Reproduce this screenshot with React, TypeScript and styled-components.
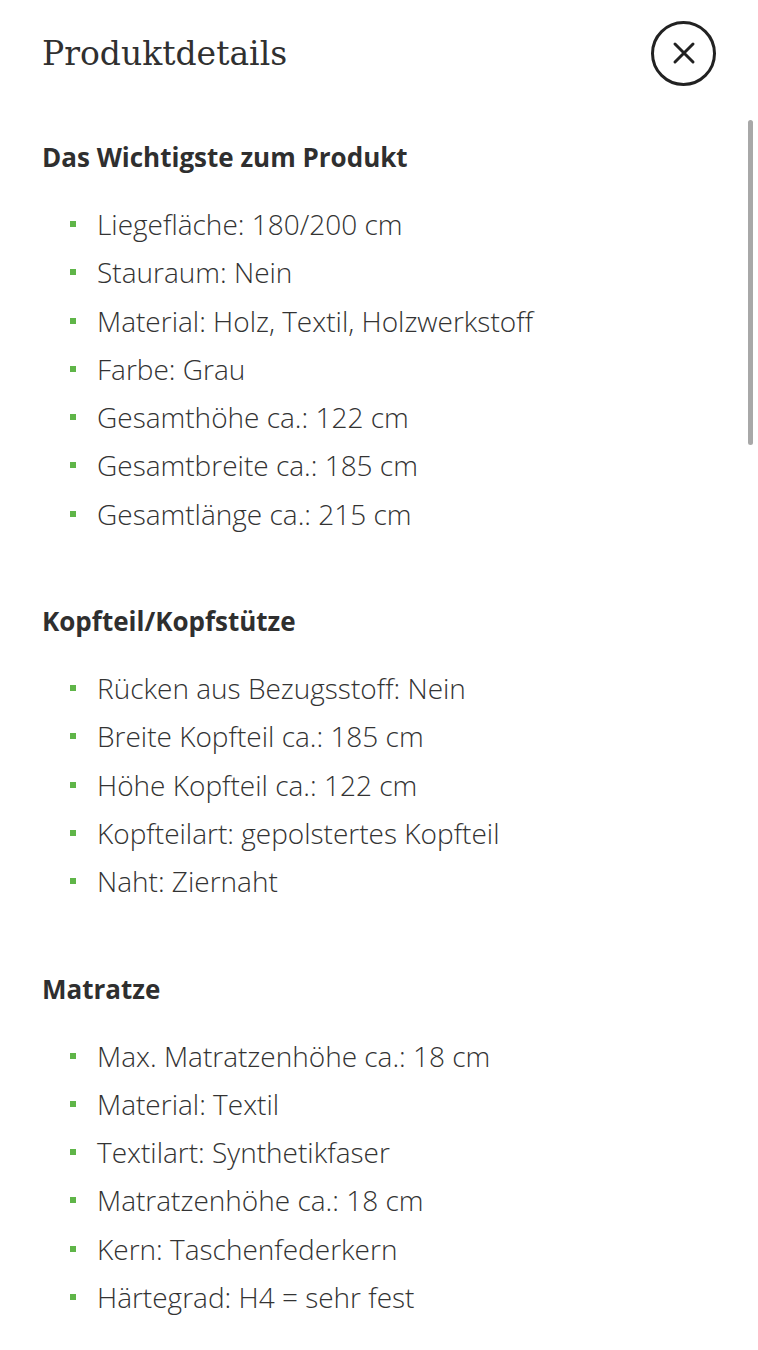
import React from "react";
import styled, { createGlobalStyle } from "styled-components";

const GlobalStyle = createGlobalStyle`
  html, body {
    margin: 0;
    padding: 0;
    background: #ffffff;
  }
  body {
    font-family: "Open Sans", "Noto Sans", sans-serif;
    color: #333333;
  }
`;

type Section = {
  title: string;
  items: string[];
};

const sections: Section[] = [
  {
    title: "Das Wichtigste zum Produkt",
    items: [
      "Liegefläche: 180/200 cm",
      "Stauraum: Nein",
      "Material: Holz, Textil, Holzwerkstoff",
      "Farbe: Grau",
      "Gesamthöhe ca.: 122 cm",
      "Gesamtbreite ca.: 185 cm",
      "Gesamtlänge ca.: 215 cm",
    ],
  },
  {
    title: "Kopfteil/Kopfstütze",
    items: [
      "Rücken aus Bezugsstoff: Nein",
      "Breite Kopfteil ca.: 185 cm",
      "Höhe Kopfteil ca.: 122 cm",
      "Kopfteilart: gepolstertes Kopfteil",
      "Naht: Ziernaht",
    ],
  },
  {
    title: "Matratze",
    items: [
      "Max. Matratzenhöhe ca.: 18 cm",
      "Material: Textil",
      "Textilart: Synthetikfaser",
      "Matratzenhöhe ca.: 18 cm",
      "Kern: Taschenfederkern",
      "Härtegrad: H4 = sehr fest",
    ],
  },
];

const App: React.FC = () => {
  return (
    <Page>
      <GlobalStyle />
      <Header>
        <Title>Produktdetails</Title>
        <CloseButton aria-label="Schließen">
          <svg width="24" height="24" viewBox="0 0 24 24" fill="none">
            <path
              d="M3 3 L21 21 M21 3 L3 21"
              stroke="#222"
              strokeWidth="3"
              strokeLinecap="round"
            />
          </svg>
        </CloseButton>
      </Header>

      <Content>
        {sections.map((s) => (
          <Block key={s.title}>
            <Heading>{s.title}</Heading>
            <List>
              {s.items.map((item) => (
                <Item key={item}>{item}</Item>
              ))}
            </List>
          </Block>
        ))}
      </Content>

      <Scrollbar />
    </Page>
  );
};

const Page = styled.div`
  position: relative;
  width: 758px;
  height: 1350px;
  overflow: hidden;
  background: #fff;
`;

const Header = styled.div`
  display: flex;
  align-items: center;
  justify-content: space-between;
  height: 106px;
  padding: 0 42px 0 42px;
  box-sizing: border-box;
`;

const Title = styled.h1`
  margin: 0;
  font-family: "DejaVu Serif", "Liberation Serif", serif;
  font-weight: 400;
  font-size: 33px;
  color: #303030;
`;

const CloseButton = styled.button`
  display: flex;
  align-items: center;
  justify-content: center;
  width: 65px;
  height: 65px;
  padding: 0;
  border: 3px solid #222;
  border-radius: 50%;
  background: #fff;
  box-sizing: border-box;
  cursor: pointer;
`;

const Content = styled.div`
  padding: 35px 42px 0 42px;
  display: flex;
  flex-direction: column;
  gap: 67px;
`;

const Block = styled.section`
  display: flex;
  flex-direction: column;
  gap: 27px;
`;

const Heading = styled.h2`
  margin: 0;
  font-family: "Open Sans", "Noto Sans", sans-serif;
  font-weight: 700;
  font-size: 26px;
  line-height: 32px;
  color: #2f2f2f;
`;

const List = styled.ul`
  margin: 0;
  padding: 0;
  list-style: none;
`;

const Item = styled.li`
  position: relative;
  padding-left: 55px;
  font-family: "Open Sans", "Noto Sans", sans-serif;
  font-weight: 300;
  font-size: 28px;
  line-height: 48.3px;
  color: #333;

  &::before {
    content: "";
    position: absolute;
    left: 28px;
    top: 21px;
    width: 6px;
    height: 6px;
    background: #5fb548;
  }
`;

const Scrollbar = styled.div`
  position: absolute;
  top: 120px;
  right: 5px;
  width: 5px;
  height: 325px;
  border-radius: 3px;
  background: #a8a8a8;
`;

export default App;
